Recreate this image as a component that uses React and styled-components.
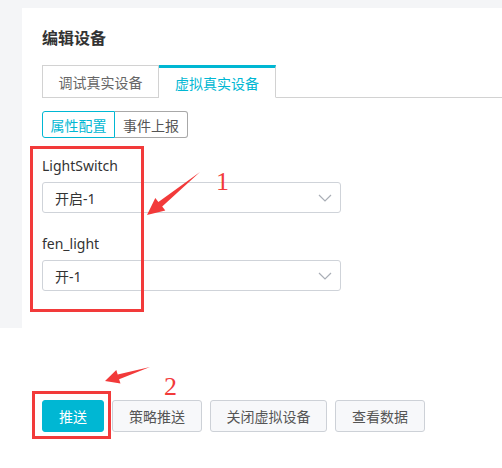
import styled, { createGlobalStyle } from 'styled-components'

const Global = createGlobalStyle`
  body {
    margin: 0;
    background: #fff;
    font-family: "Noto Sans", "Noto Sans CJK SC", sans-serif;
  }
`

const Page = styled.div`
  position: relative;
  width: 502px;
  height: 468px;
  overflow: hidden;
`
const Shell = styled.div`
  background: #f4f5f7;
  padding: 8px 0 0 22px;
`
const Card = styled.section`
  background: #fff;
  padding: 20px 0 37px 20px;
`
const Title = styled.h3`
  margin: 0 0 17px;
  font-size: 16px;
  line-height: 20px;
  font-weight: 700;
  color: #333;
`
const Tabs = styled.div`
  display: flex;
  border-bottom: 1px solid #d2d2d2;
`
const Tab = styled.div`
  width: 117px;
  height: 33px;
  box-sizing: border-box;
  display: flex;
  align-items: center;
  justify-content: center;
  font-size: 14px;
  margin-bottom: -1px;
  color: ${p => (p.$active ? '#00b7d3' : '#666')};
  background: #fff;
  border: 1px solid #d2d2d2;
  border-top: ${p => (p.$active ? '3px solid #00b7d3' : '1px solid #d2d2d2')};
  border-bottom: ${p => (p.$active ? '1px solid #fff' : '1px solid #d2d2d2')};
  border-left: ${p => (p.$active ? 'none' : '1px solid #d2d2d2')};
`
const Segments = styled.div`
  display: inline-flex;
  margin-top: 13px;
`
const Segment = styled.div`
  width: 73px;
  height: 27px;
  box-sizing: border-box;
  display: flex;
  align-items: center;
  justify-content: center;
  font-size: 14px;
  color: ${p => (p.$active ? '#00b7d3' : '#555')};
  border: 1px solid ${p => (p.$active ? '#00b7d3' : '#a8a8a8')};
  border-left: ${p => (p.$active ? '1px solid #00b7d3' : 'none')};
  border-radius: ${p => (p.$active ? '3px 0 0 3px' : '0 3px 3px 0')};
`
const Form = styled.div`
  display: flex;
  flex-direction: column;
  gap: 20px;
  margin-top: 17px;
`
const Field = styled.div`
  display: flex;
  flex-direction: column;
  gap: 5px;
`
const Label = styled.label`
  font-size: 14px;
  line-height: 22px;
  color: #333;
`
const Select = styled.div`
  width: 299px;
  height: 31px;
  box-sizing: border-box;
  border: 1px solid #cfd3d9;
  border-radius: 3px;
  display: flex;
  align-items: center;
  justify-content: space-between;
  padding: 0 8px 0 12px;
  font-size: 14px;
  color: #333;
`
const Footer = styled.div`
  display: flex;
  gap: 8px;
  padding: 72px 0 0 42px;
`
const Button = styled.button`
  flex: none;
  height: 32px;
  width: ${p => p.$w}px;
  box-sizing: border-box;
  padding: 0;
  border-radius: 3px;
  font-family: inherit;
  font-size: 14px;
  cursor: pointer;
  color: ${p => (p.$primary ? '#fff' : '#555')};
  background: ${p => (p.$primary ? '#00b7d3' : '#f7f8fa')};
  border: 1px solid ${p => (p.$primary ? '#00b7d3' : '#cdd1d7')};
`
const RedBox = styled.div`
  position: absolute;
  left: ${p => p.$x}px;
  top: ${p => p.$y}px;
  width: ${p => p.$w}px;
  height: ${p => p.$h}px;
  box-sizing: border-box;
  border: 3px solid #f23a3a;
`
const Mark = styled.span`
  position: absolute;
  left: ${p => p.$x}px;
  top: ${p => p.$y}px;
  font-family: "Liberation Serif", serif;
  font-size: 26px;
  line-height: 26px;
  color: #f23a3a;
`
const Overlay = styled.svg`
  position: absolute;
  left: 0;
  top: 0;
`

const Chevron = () => (
  <svg width="14" height="8" viewBox="0 0 14 8">
    <path d="M1 1l6 6 6-6" fill="none" stroke="#a9aeb6" strokeWidth="1.2" />
  </svg>
)

const fields = [
  { label: 'LightSwitch', value: '开启-1' },
  { label: 'fen_light', value: '开-1' },
]

function App() {
  return (
    <Page>
      <Global />
      <Shell>
        <Card>
          <Title>编辑设备</Title>
          <Tabs>
            <Tab>调试真实设备</Tab>
            <Tab $active>虚拟真实设备</Tab>
          </Tabs>
          <Segments>
            <Segment $active>属性配置</Segment>
            <Segment>事件上报</Segment>
          </Segments>
          <Form>
            {fields.map(f => (
              <Field key={f.label}>
                <Label>{f.label}</Label>
                <Select>
                  <span>{f.value}</span>
                  <Chevron />
                </Select>
              </Field>
            ))}
          </Form>
        </Card>
      </Shell>
      <Footer>
        <Button $primary $w={62}>推送</Button>
        <Button $w={90}>策略推送</Button>
        <Button $w={117}>关闭虚拟设备</Button>
        <Button $w={90}>查看数据</Button>
      </Footer>

      <RedBox $x={30} $y={146} $w={114} $h={166} />
      <RedBox $x={32} $y={391} $w={79} $h={48} />
      <Overlay width="502" height="468" viewBox="0 0 502 468">
        <polygon points="200,172 158.4,201.9 155.3,198.1 147,215 165.3,210.5 162.2,206.6" fill="#f23a3a" />
        <polygon points="150,367 117.7,374.4 116.3,370.1 105,381 120.5,383.5 119.1,379.2" fill="#f23a3a" />
      </Overlay>
      <Mark $x={216} $y={169}>1</Mark>
      <Mark $x={164} $y={374}>2</Mark>
    </Page>
  )
}

export default App
